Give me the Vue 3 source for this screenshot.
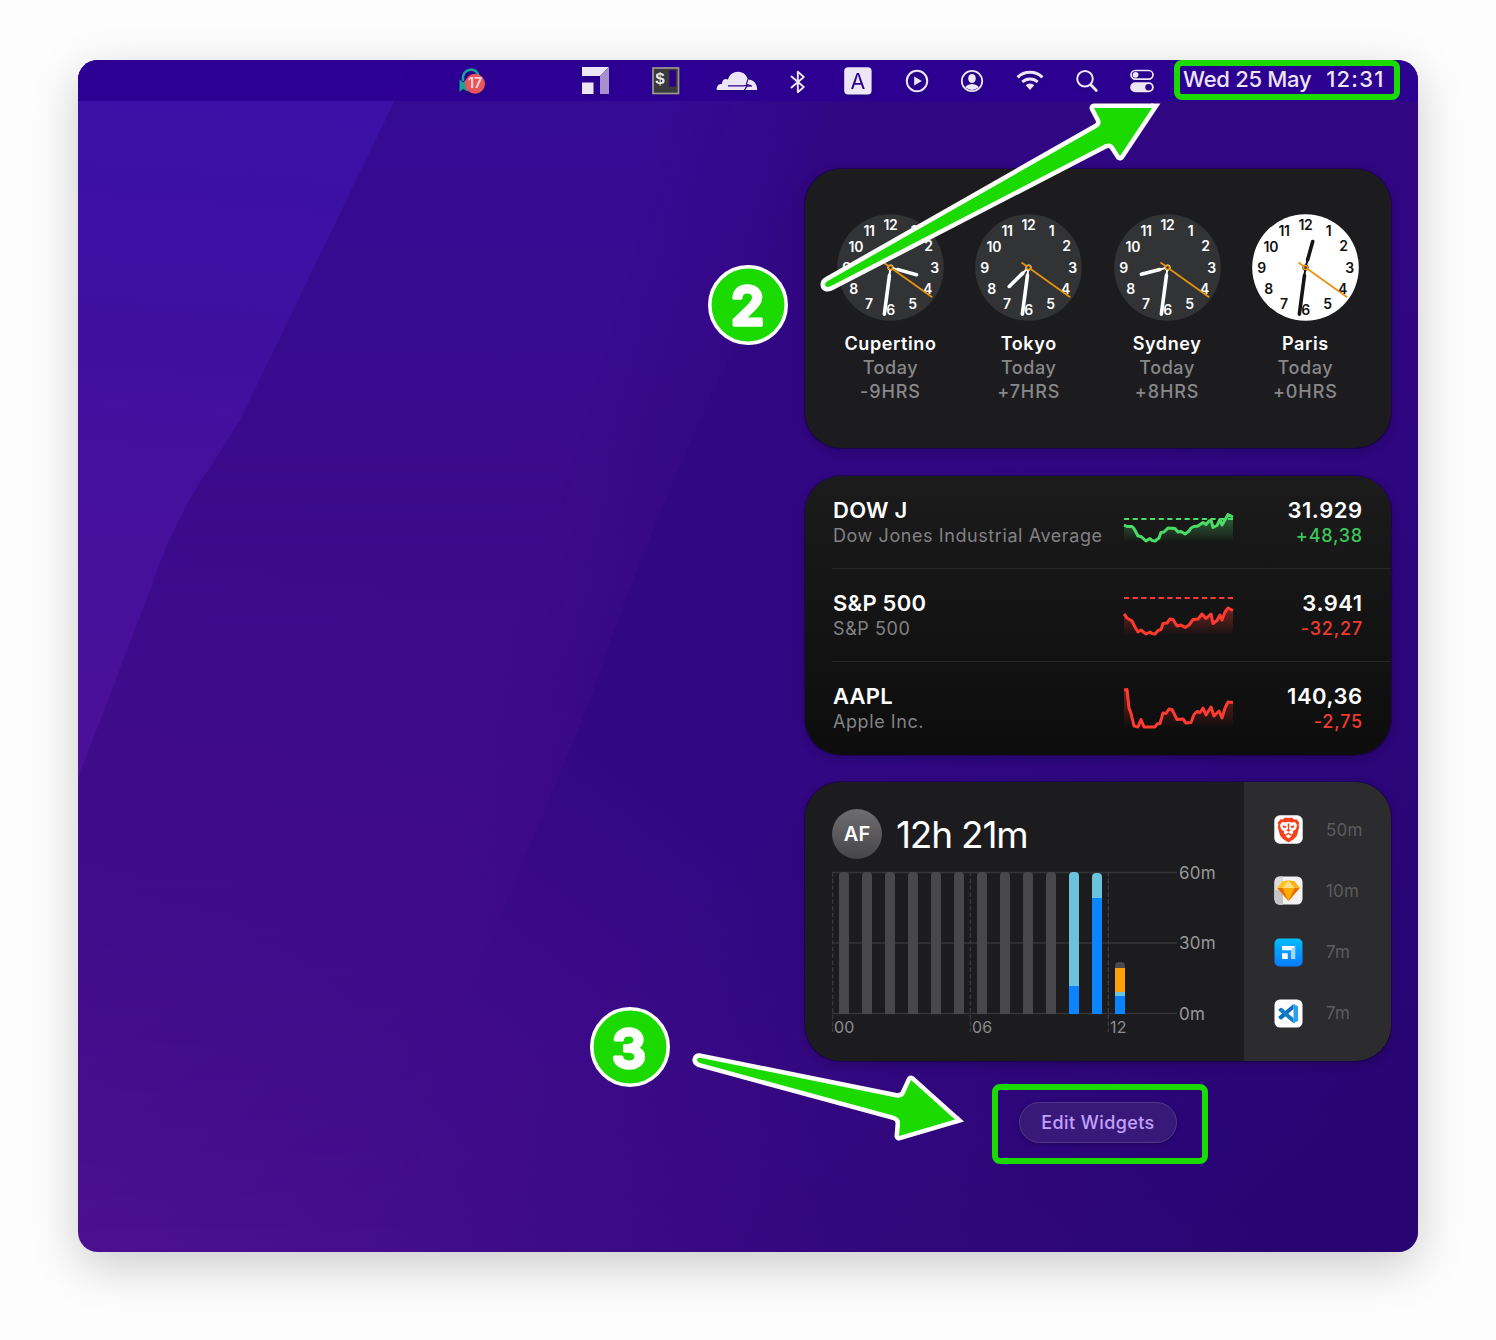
<script setup>
const zones = [
  { city: 'Cupertino', offset: '-9HRS', hour: 105.5, light: false },
  { city: 'Tokyo', offset: '+7HRS', hour: 225.5, light: false },
  { city: 'Sydney', offset: '+8HRS', hour: 255.5, light: false },
  { city: 'Paris', offset: '+0HRS', hour: 15.5, light: true },
]

const numerals = [
  [12, 0, -43], [1, 23, -36.3], [2, 38, -21.2], [3, 44, 0.4], [4, 37, 21.6], [5, 22, 36.6],
  [6, 0, 42.8], [7, -21.5, 36.2], [8, -37, 21.6], [9, -44, 0.4], [10, -34.6, -20.8], [11, -21.4, -37],
]

const stocks = [
  {
    symbol: 'DOW J', name: 'Dow Jones Industrial Average', price: '31.929', change: '+48,38', color: '#4bdc66', text: '#3fc65a',
    base: 11,
    line: '0,17 3,18.5 8,18.5 10,20.5 14,28 17,28.5 22,33 26,30.5 28,32.5 31,33 35,30 37,24.5 40,24 44,20 51,20.5 54,24 57,23.5 61,26 65,23 67,20 70,18.5 74,18 79,14.5 82,16.5 85,13 87,12 89,19.5 93,17.5 96,11.5 98,17 102,10 104,6.5 109,9',
  },
  {
    symbol: 'S&P 500', name: 'S&P 500', price: '3.941', change: '-32,27', color: '#ff3a30', text: '#f13b31',
    base: -3,
    line: '0,13 3,17 8,20 11,26 14,31 17,29 22,33 26,31 28,32.5 31,33 34,29.5 37,28.5 39,22.5 43,22 46,18 49,18.5 53,25 57,24 61,26.5 65,24 69,18.5 74,18 78,13 82,17.5 87,13 89,22.5 93,19.5 96,14 98,19 101,11 104,7 109,9.5',
  },
  {
    symbol: 'AAPL', name: 'Apple Inc.', price: '140,36', change: '-2,75', color: '#ff3a30', text: '#f13b31',
    base: null,
    line: '0,-4 3,-4.5 5,14 7,19.5 10,32 14,33 17,25.5 20,33 31,33 33,30 36,29.5 39,19 42,19.5 45,15 48,15.5 53,25.5 59,25 62,29 67,28.5 70,20.5 73,17.5 76,18.5 79,14 82,21 87,13 90,22 95,17 98,24 101,14 104,8 109,8.5',
  },
]

const idle = '#48484a'
const blue = '#0a84ff'
const cyan = '#6ac4dc'
const bars = [
  ...Array.from({ length: 10 }, () => [{ h: 142, c: idle }]),
  [{ h: 114, c: cyan }, { h: 28, c: blue }],
  [{ h: 25, c: cyan }, { h: 116, c: blue }],
  [{ h: 6, c: idle }, { h: 24, c: '#ff9f0a' }, { h: 4, c: cyan }, { h: 18, c: blue }],
]

const apps = [
  { id: 'brave', time: '50m' },
  { id: 'sketch', time: '10m' },
  { id: 'tile', time: '7m' },
  { id: 'code', time: '7m' },
]
</script>

<template>
  <div class="page">
    <main class="desktop">
      <svg class="wallpaper" viewBox="78 60 1340 1192" preserveAspectRatio="none" aria-hidden="true">
        <defs>
          <linearGradient id="wpBase" gradientUnits="userSpaceOnUse" x1="78" y1="1252" x2="1000" y2="60">
            <stop offset="0" stop-color="#4b1090" />
            <stop offset=".3" stop-color="#3d0a89" />
            <stop offset=".5" stop-color="#320783" />
            <stop offset="1" stop-color="#300682" />
          </linearGradient>
          <linearGradient id="wpLeft" gradientUnits="userSpaceOnUse" x1="180" y1="60" x2="130" y2="720">
            <stop offset="0" stop-color="#3a11a8" />
            <stop offset=".4" stop-color="#400fa0" />
            <stop offset="1" stop-color="#4a1097" />
          </linearGradient>
          <linearGradient id="wpMid" gradientUnits="userSpaceOnUse" x1="420" y1="60" x2="420" y2="1230">
            <stop offset="0" stop-color="#350b95" stop-opacity=".95" />
            <stop offset=".3" stop-color="#3b0b8d" stop-opacity=".95" />
            <stop offset=".65" stop-color="#400c8b" stop-opacity=".85" />
            <stop offset="1" stop-color="#460e8d" stop-opacity="0" />
          </linearGradient>
          <linearGradient id="wpSide" gradientUnits="userSpaceOnUse" x1="700" y1="0" x2="900" y2="60">
            <stop offset="0" stop-color="#fff" />
            <stop offset="1" stop-color="#000" />
          </linearGradient>
          <mask id="wpSideMask"><rect x="78" y="60" width="1340" height="1192" fill="url(#wpSide)" /></mask>
          <linearGradient id="wpDark" gradientUnits="userSpaceOnUse" x1="900" y1="700" x2="1418" y2="1252">
            <stop offset="0" stop-color="#24046a" stop-opacity="0" />
            <stop offset="1" stop-color="#24046a" stop-opacity=".75" />
          </linearGradient>
        </defs>
        <rect x="78" y="60" width="1340" height="1192" fill="url(#wpBase)" />
        <path d="M78 60H850Q790 190 740 335Q650 520 590 700Q500 920 460 1010L395 1252H78Z" fill="url(#wpMid)" mask="url(#wpSideMask)" />
        <path d="M78 60H412L392 106L240 420Q225 445 200 482Q170 530 150 590L78 778Z" fill="url(#wpLeft)" />
        <rect x="78" y="60" width="1340" height="1192" fill="url(#wpDark)" />
      </svg>

      <header class="menubar">
        <svg class="i-bell" width="28" height="28" viewBox="0 0 28 28">
          <path d="M4 13C2.500 -1.500 18.500 -1 19.500 8" fill="none" stroke="#17a398" stroke-width="2.600" />
          <path d="M.5 11.500L4 14.500L9 10.500V23.500L4 21L.5 24Z" fill="#17a398" />
          <circle cx="16" cy="15.700" r="10" fill="#ea545c" />
          <text x="16" y="20.300" text-anchor="middle" font-size="14" font-weight="700" fill="#ffd0d4">17</text>
        </svg>
        <svg class="i-tile" width="27" height="27" viewBox="0 0 27 27">
          <path d="M0 0H27L18 9H0Z" fill="#ece6f6" /><path d="M27 0V27H18V9Z" fill="#a78fd0" />
          <path d="M0 15.500H11.500V27H0Z" fill="#ece6f6" />
        </svg>
        <svg class="i-term" width="28" height="28" viewBox="0 0 28 28">
          <rect x="1" y="1" width="25.500" height="25.500" fill="#3a3a3c" stroke="#9b9992" stroke-width="1.700" />
          <rect x="17.300" y="3.500" width="6.500" height="16" fill="#2b0084" />
          <text x="8.200" y="16.800" text-anchor="middle" class="mono" font-size="17" font-weight="700" fill="#e8e8e8">$</text>
        </svg>
        <svg class="i-cloud" width="42" height="20" viewBox="0 0 42 20">
          <path d="M.7 19C.3 15.500 2.500 12.800 6 12.700C5.800 9.200 9 7 12 8.600C13.500 3.200 17.500 .5 22.300 .7C27.300 .9 30.800 4 31.700 8.400C37.800 8.500 41.500 13 41.200 19Z" fill="#ece6f6" />
          <path d="M12 14.800H27.500L31.500 14.200" stroke="#2d008b" stroke-width="1.200" fill="none" /><path d="M31.800 8.400L30.500 13.200L36 15L31 15.200L28.300 19.200" stroke="#2d008b" stroke-width="1.100" fill="#2d008b" fill-opacity=".6" />
        </svg>
        <svg class="i-bt" width="16" height="24" viewBox="0 0 16 24" fill="none" stroke="#ece6f6" stroke-width="1.900" stroke-linejoin="round" stroke-linecap="round">
          <path d="M1.500 6.500L13.800 17L7.800 22.200V1.800L13.800 7L1.500 17.500" />
        </svg>
        <svg class="i-a" width="28" height="28" viewBox="0 0 28 28">
          <rect x=".2" y=".2" width="27.400" height="27.400" rx="4" fill="#ece6f6" />
          <text x="13.900" y="21.500" text-anchor="middle" font-size="21.500" font-weight="400" fill="#2d008b">A</text>
        </svg>
        <svg class="i-play" width="24" height="24" viewBox="0 0 24 24">
          <circle cx="12" cy="12" r="10.200" fill="none" stroke="#ece6f6" stroke-width="2" /><path d="M9.200 7.600V16.400L16.800 12Z" fill="#ece6f6" />
        </svg>
        <svg class="i-user" width="24" height="24" viewBox="0 0 24 24">
          <defs><clipPath id="userClip"><circle cx="12" cy="12" r="8.900" /></clipPath></defs>
          <circle cx="12" cy="12" r="10.200" fill="none" stroke="#ece6f6" stroke-width="1.800" />
          <g clip-path="url(#userClip)" fill="#ece6f6"><ellipse cx="12" cy="9.500" rx="3.800" ry="4.500" /><ellipse cx="12" cy="20.500" rx="7.800" ry="5.400" /></g>
        </svg>
        <svg class="i-wifi" width="28" height="22" viewBox="0 0 28 22" fill="none" stroke="#ece6f6" stroke-width="3">
          <path d="M1.600 8.300A17.800 17.800 0 0 1 26.400 8.300" /><path d="M6.300 13A11.200 11.200 0 0 1 21.700 13" />
          <path d="M9.700 16.300A6.200 6.200 0 0 1 18.300 16.300L14 21Z" fill="#ece6f6" stroke="none" />
        </svg>
        <svg class="i-search" width="24" height="24" viewBox="0 0 24 24" fill="none" stroke="#ece6f6">
          <circle cx="10" cy="9.800" r="7.800" stroke-width="2" /><path d="M15.800 15.800L21.300 21.500" stroke-width="2.800" stroke-linecap="round" />
        </svg>
        <svg class="i-cc" width="24" height="24" viewBox="0 0 24 24">
          <rect x="1" y="1.500" width="22" height="8.600" rx="4.300" fill="none" stroke="#ece6f6" stroke-width="1.700" /><circle cx="5.600" cy="5.800" r="2.900" fill="#ece6f6" />
          <rect x=".2" y="13.200" width="23.600" height="10" rx="5" fill="#ece6f6" /><circle cx="18.600" cy="18.200" r="3.300" fill="#2d008b" />
        </svg>
        <div class="datetime"><span>Wed 25 May</span><span class="time">12:31</span></div>
      </header>

      <section class="widgets">
        <article class="card clocks">
          <div v-for="z in zones" :key="z.city" class="zone">
            <svg class="face" :class="{ light: z.light }" width="107" height="107" viewBox="-53.500 -53.500 107 107">
              <circle class="dial" r="53.300" />
              <text v-for="n in numerals" :key="n[0]" :x="n[1]" :y="n[2] + 5" class="num">{{ n[0] }}</text>
              <g class="hand" :transform="`rotate(${z.hour})`"><path d="M0 0V-9" stroke-width="2" /><path d="M0-8V-27" stroke-width="3.600" /></g>
              <g class="hand" transform="rotate(187.500)"><path d="M0 0V-9" stroke-width="2" /><path d="M0-8V-47" stroke-width="3.600" /></g>
              <circle class="hub" r="3.100" />
              <path d="M-7-5L41.700 29.800" stroke="#e8920c" stroke-width="1.700" />
              <circle class="pin" r="2" />
            </svg>
            <div class="city">{{ z.city }}</div>
            <div class="meta">Today</div>
            <div class="meta offset">{{ z.offset }}</div>
          </div>
        </article>

        <article class="card stocks">
          <div v-for="(s, i) in stocks" :key="s.symbol" class="stock">
            <div class="names"><div class="sym">{{ s.symbol }}</div><div class="sub">{{ s.name }}</div></div>
            <svg class="spark" width="109" height="36" viewBox="0 0 109 36">
              <defs>
                <linearGradient :id="'sp' + i" x1="0" y1="0" x2="0" y2="1">
                  <stop offset="0" :stop-color="s.color" stop-opacity=".42" /><stop offset="1" :stop-color="s.color" stop-opacity="0" />
                </linearGradient>
              </defs>
              <polygon :points="`0,34 ${s.line} 109,34`" :fill="`url(#sp${i})`" />
              <path v-if="s.base !== null" :d="`M0 ${s.base}H109`" :stroke="s.color" stroke-width="1.800" stroke-dasharray="5.200 3.450" />
              <polyline :points="s.line" fill="none" :stroke="s.color" stroke-width="3" stroke-linejoin="round" />
            </svg>
            <div class="quote"><div class="sym">{{ s.price }}</div><div class="sub" :style="{ color: s.text }">{{ s.change }}</div></div>
          </div>
        </article>

        <article class="card screentime">
          <div class="usage">
            <div class="head"><div class="avatar">AF</div><div class="total">12h 21m</div></div>
            <div class="chart">
              <div class="plot">
                <svg class="grid" width="346" height="162" viewBox="0 0 346 162" fill="none">
                  <path d="M0 1.500H345M0 72H345M0 142.500H345" stroke="#353537" stroke-width="1.600" />
                  <path d="M.5 1V161M138.400 1V161M276.300 1V161" stroke="#39393b" stroke-width="1.500" stroke-dasharray="4.500 2.300" />
                </svg>
                <div class="bars">
                  <div v-for="(b, i) in bars" :key="i" class="bar">
                    <div v-for="(p, j) in b" :key="j" :style="{ height: p.h + 'px', background: p.c }"></div>
                  </div>
                </div>
                <div class="hours"><span>00</span><span>06</span><span>12</span></div>
              </div>
              <div class="scale"><span>60m</span><span>30m</span><span>0m</span></div>
            </div>
          </div>
          <div class="apps">
            <div v-for="a in apps" :key="a.id" class="app">
              <svg width="29" height="29" viewBox="0 0 29 29">
                <template v-if="a.id === 'brave'">
                  <rect x=".3" y=".3" width="28.400" height="28.400" rx="5.500" fill="#fff" />
                  <path d="M9 4.500L10.500 2.800H18.500L20 4.500L22.500 4.300L25.300 7.600L24.600 10L25.200 12L23 20.500L20 24L14.500 27.400L9 24L6 20.500L3.800 12L4.400 10L3.700 7.600L6.500 4.300Z" fill="#f5401d" />
                  <path d="M8 7L11.500 7.400L14.500 6.800L17.500 7.400L21 7L23 10L22 14L18.800 16.500L19.300 18.500L17.500 19.500L14.500 17.600L11.500 19.500L9.700 18.500L10.200 16.500L7 14L6 10Z" fill="#fff" />
                  <path d="M8.500 10.200L12.500 11.300L11.700 13L9 12.500ZM20.500 10.200L16.500 11.300L17.300 13L20 12.500ZM13.600 8.500H15.400L15 14L16.800 15.200L14.500 16.800L12.200 15.200L14 14Z" fill="#f5401d" />
                  <path d="M11.500 21L14.500 19.300L17.500 21L14.500 23.500Z" fill="#fff" />
                </template>
                <template v-else-if="a.id === 'sketch'">
                  <rect x=".5" y=".5" width="28" height="28" rx="5.500" fill="#f3f3f3" />
                  <path d="M6 .5H9V28.500H6Q.5 28.500 .5 23V6Q.5 .5 6 .5Z" fill="#dcdcdc" />
                  <path d="M.5 14H9V28.500H6Q.5 28.500 .5 23Z" fill="#c4c4c4" />
                  <path d="M9 10.500H28.500" stroke="#ddd" stroke-width=".8" />
                  <path d="M8.500 5.200L14.500 4.600L20.500 5.200L25.700 12L14.500 25L3.300 12Z" fill="#fdad00" />
                  <path d="M3.300 12L8.500 5.200L14.500 4.600L8 12Z" fill="#fdc31f" /><path d="M25.700 12L20.500 5.200L14.500 4.600L21 12Z" fill="#fdb515" />
                  <path d="M14.500 4.600L8.500 12H20.500Z" fill="#fee08a" /><path d="M3.300 12H8.500L14.500 25Z" fill="#ea6c00" /><path d="M25.700 12H20.500L14.500 25Z" fill="#ea6c00" />
                </template>
                <template v-else-if="a.id === 'tile'">
                  <defs><linearGradient id="tileBg" x1="0" y1="0" x2="0" y2="1"><stop offset="0" stop-color="#06bcff" /><stop offset="1" stop-color="#087bff" /></linearGradient></defs>
                  <rect x=".5" y=".5" width="28" height="28" rx="5" fill="url(#tileBg)" />
                  <path d="M8 8H21.300L17 12.300H8Z" fill="#fff" /><path d="M21.300 8V21H17V12.300Z" fill="#a6d6ff" /><path d="M8 15.300H13.700V21H8Z" fill="#fff" />
                </template>
                <template v-else>
                  <rect x=".5" y=".5" width="28" height="28" rx="5.500" fill="#fff" />
                  <path d="M19.500 5L24 7.200V22L19.500 24.200Z" fill="#2ba0ef" />
                  <path d="M19.500 10V5L4.500 17.600V18.800L6.500 20.500L8 20.200Z" fill="#0b6fc0" />
                  <path d="M19.500 19.200V24.200L4.500 11.600V10.400L6.500 8.700L8 9Z" fill="#0f7dcc" />
                </template>
              </svg>
              <span>{{ a.time }}</span>
            </div>
          </div>
        </article>

        <div class="edit-frame"><button class="edit">Edit Widgets</button></div>
      </section>
    </main>

    <svg class="annotations" width="1496" height="1340" viewBox="0 0 1496 1340">
      <g fill="#fff">
        <path d="M1160.400 103.500H1151L1155.700 110.500Z" /><path d="M964 1121.600L958 1116.100L952 1120L956.300 1123.800Z" />
      </g>
      <g fill="#1ada00" stroke="#fff" stroke-width="9" stroke-linejoin="round" paint-order="stroke">
        <path d="M827.300 281.200L1097 127.700Q1102.300 124.500 1100 119.500L1094 108H1152L1120 156L1114.500 147.500Q1111 141.500 1105 144.300L830 286.500Q825 288 825 284.500Q825 282.500 827.300 281.200Z" />
        <path d="M700 1057.800L896 1097.500Q904 1098.500 905.500 1092L911 1080L955 1119.500L899 1136L900 1124Q900.500 1117.500 893 1115.500L700 1063Q696.500 1061.500 697 1059.500Q697.500 1057.500 700 1057.800Z" />
      </g>
      <g fill="#1ada00" stroke="#fff" stroke-width="3.600">
        <circle cx="748" cy="305" r="38.200" /><circle cx="630" cy="1047" r="38.200" />
      </g>
      <g class="step" fill="#fff" stroke="#fff" stroke-width="3.400" stroke-linejoin="round" text-anchor="middle">
        <text x="747.500" y="325.200">2</text><text x="629" y="1067.700">3</text>
      </g>
    </svg>
  </div>
</template>

<style>
body { margin: 0; background: #fdfdfd; }
</style>

<style scoped>
.page { position: relative; box-sizing: border-box; width: 1496px; height: 1340px; padding: 60px 78px 88px; overflow: hidden; background: #fdfdfd; font-family: Inter, "Liberation Sans", sans-serif; }
.desktop { position: relative; width: 1340px; height: 1192px; border-radius: 20px; overflow: hidden; isolation: isolate; }
.page::before { content: ""; position: absolute; left: 78px; top: 60px; width: 1340px; height: 1192px; border-radius: 20px; box-shadow: 0 14px 48px rgba(0, 0, 0, .2); }
.wallpaper { position: absolute; inset: 0; width: 100%; height: 100%; z-index: -1; }
.annotations { position: absolute; left: 0; top: 0; }
.annotations .step { font: 600 54px Inter, sans-serif; }

.menubar { display: flex; align-items: flex-start; height: 41px; background: rgba(44, 0, 146, .92); }
.menubar svg { flex: none; overflow: visible; filter: drop-shadow(0 2px 2px rgba(20, 0, 70, .3)); }
.mono { font-family: "Liberation Mono", monospace; }
.i-bell { margin: 8px 0 0 381px; }
.i-tile { margin: 7px 0 0 95px; }
.i-term { margin: 7px 0 0 43px; }
.i-cloud { margin: 11px 0 0 36px; }
.i-bt { margin: 10px 0 0 31.500px; }
.i-a { margin: 7px 0 0 38.500px; }
.i-play { margin: 9px 0 0 33px; }
.i-user { margin: 9px 0 0 31px; }
.i-wifi { margin: 9px 0 0 32px; }
.i-search { margin: 9px 0 0 31px; }
.i-cc { margin: 9px 0 0 31px; }
.datetime { display: flex; flex: none; box-sizing: border-box; width: 226px; height: 40px; margin-left: 20px; padding-left: 3px; border: 6px solid #1ada00; border-radius: 8px; color: #ece6f6; font-size: 22px; font-weight: 500; line-height: 27px; letter-spacing: -.3px; white-space: nowrap; }
.time { margin-left: 15px; letter-spacing: 1.200px; }

.widgets { display: flex; flex-direction: column; width: 586px; margin: 68px 0 0 727px; }
.card { box-sizing: border-box; height: 279px; margin-bottom: 27.500px; border-radius: 36px; background: #1c1c1e; overflow: hidden; box-shadow: 0 0 0 1px rgba(10, 0, 40, .4), 0 3px 10px rgba(10, 0, 40, .3); }
.clocks { display: flex; padding: 45px 0 0 16.300px; }
.zone { flex: none; width: 138.300px; text-align: center; }
.face { display: block; margin: 0 auto 11px; }
.dial { fill: #323335; }
.num { fill: #fff; font-size: 14px; font-weight: 600; text-anchor: middle; letter-spacing: -.2px; }
.hand { stroke: #fff; stroke-linecap: round; }
.hub { fill: #fff; }
.pin { fill: #323335; stroke: #f09a10; stroke-width: 1.400px; }
.light .dial { fill: #fff; }
.light .num, .light .hub { fill: #111; }
.light .hand { stroke: #151515; }
.city, .meta { font-size: 18px; line-height: 24px; letter-spacing: .6px; }
.city { color: #fff; font-weight: 600; }
.meta { color: #88888a; font-weight: 500; }
.meta.offset { letter-spacing: .9px; }

.stocks { background: linear-gradient(#1b1b1b, #0d0d0d); padding-left: 27px; }
.stock { display: flex; box-sizing: border-box; height: 93px; padding: 20px 29px 0 1px; border-bottom: 1.500px solid #262627; }
.stock:last-child { border: 0; }
.names { width: 291px; white-space: nowrap; }
.spark { margin-top: 12px; overflow: visible; }
.quote { flex: 1; text-align: right; }
.sym { color: #fff; font-size: 22px; font-weight: 600; line-height: 28px; letter-spacing: .25px; }
.sub { color: #828284; font-size: 18px; line-height: 24px; letter-spacing: .58px; }
.quote .sym { margin-right: -.5px; letter-spacing: .5px; }
.quote .sub { margin-right: -1px; font-weight: 500; letter-spacing: .8px; }

.screentime { display: flex; }
.usage { box-sizing: border-box; width: 439px; padding: 27px 0 0 27px; }
.head { display: flex; align-items: center; height: 50px; }
.avatar { width: 50px; height: 50px; border-radius: 50%; background: linear-gradient(#6e6e70, #464648); color: #fff; font-size: 20px; font-weight: 600; line-height: 51px; text-align: center; }
.total { margin-left: 14px; color: #fff; font-size: 37px; font-weight: 400; letter-spacing: -1.200px; line-height: 51px; }
.chart { display: flex; margin-top: 12px; }
.plot { position: relative; width: 346px; height: 164px; }
.grid { position: absolute; left: 0; top: 0; }
.bars { position: relative; display: flex; align-items: flex-end; gap: 13px; height: 143px; padding-left: 7px; }
.bar { width: 10px; border-radius: 4px 4px 0 0; overflow: hidden; }
.hours { display: flex; padding-left: 2px; color: #8b8b8d; font-size: 16px; line-height: 26px; letter-spacing: .2px; }
.hours span { flex: none; width: 138px; }
.hours span:last-child { width: auto; }
.scale { display: flex; flex-direction: column; gap: 50.500px; margin: -8.500px 0 0 1px; color: #98989a; font-size: 17px; line-height: 20px; letter-spacing: .3px; }
.apps { box-sizing: border-box; flex: 1; padding: 33px 0 0 30px; background: #2c2c2e; }
.app { display: flex; align-items: center; height: 29px; margin-bottom: 32.300px; color: #5c5c5e; font-size: 17px; letter-spacing: .2px; }
.app span { margin-left: 23px; }

.edit-frame { display: flex; align-items: center; justify-content: center; box-sizing: border-box; width: 216px; height: 80px; margin: -4.500px 0 0 187px; border: 6px solid #1ada00; border-radius: 8px; }
.edit { box-sizing: border-box; width: 158px; height: 41px; margin: -3px 0 0 -4px; padding: 0; border: 1.500px solid #54378c; border-radius: 21px; background: #38197a; box-shadow: 0 1px 4px rgba(15, 0, 60, .5); color: #c3a0fb; font: 500 18px Inter, sans-serif; letter-spacing: .4px; }
</style>
